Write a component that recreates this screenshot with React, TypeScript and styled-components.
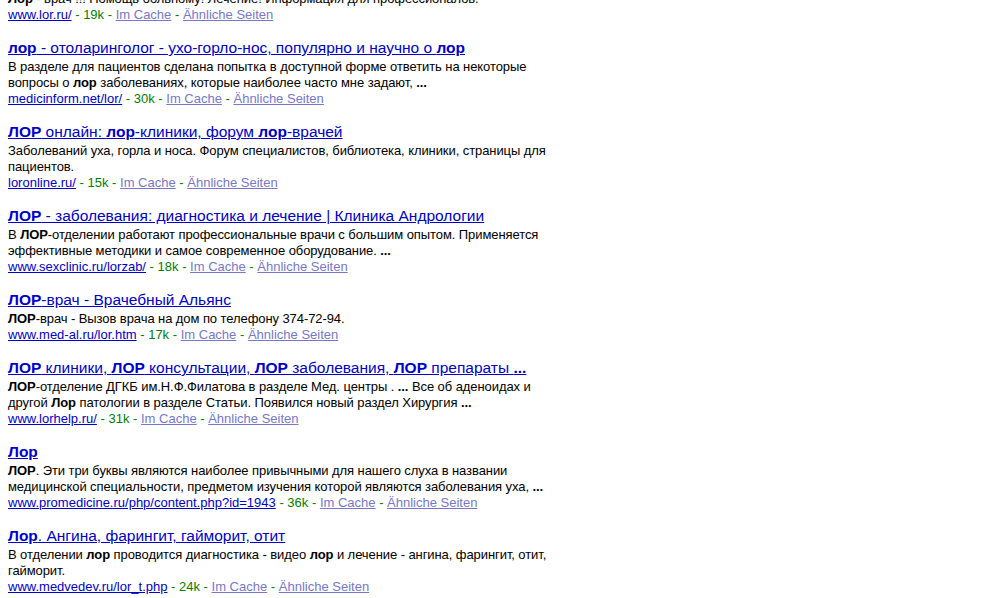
import React from "react";
import styled, { createGlobalStyle } from "styled-components";

const GlobalStyle = createGlobalStyle`
  html, body {
    margin: 0;
    padding: 0;
    background: #fff;
    overflow: hidden;
  }
  body {
    font-family: "Liberation Sans", Arial, sans-serif;
    color: #000;
  }
`;

const Page = styled.div`
  padding: 0 8px;
  margin-top: -31px;
`;

const Result = styled.div`
  margin-bottom: 14px;
`;

const Title = styled.a`
  display: block;
  width: fit-content;
  font-size: 15.5px;
  line-height: 22px;
  color: #0000cc;
  text-decoration: underline;
  cursor: pointer;
`;

const Snippet = styled.div`
  max-width: 546px;
  font-size: 13px;
  line-height: 16px;
  letter-spacing: -0.08px;
`;

const Meta = styled.div`
  font-size: 13px;
  line-height: 16px;
  color: #008000;
`;

const MetaLink = styled.a<{ $faded?: boolean }>`
  color: ${(p) => (p.$faded ? "#7777cc" : "#0000cc")};
  text-decoration: underline;
  cursor: pointer;
`;

type Item = {
  title: string;
  snippet: string;
  url: string;
  size: string;
};

const results: Item[] = [
  {
    title: "*Лор* - врач",
    snippet:
      "*Лор* - врач !!! Помощь больному! Лечение! Информация для профессионалов.",
    url: "www.lor.ru/",
    size: "19k",
  },
  {
    title: "*лор* - отоларинголог - ухо-горло-нос, популярно и научно о *лор*",
    snippet:
      "В разделе для пациентов сделана попытка в доступной форме ответить на некоторые вопросы о *лор* заболеваниях, которые наиболее часто мне задают, *...*",
    url: "medicinform.net/lor/",
    size: "30k",
  },
  {
    title: "*ЛОР* онлайн: *лор*-клиники, форум *лор*-врачей",
    snippet:
      "Заболеваний уха, горла и носа. Форум специалистов, библиотека, клиники, страницы для пациентов.",
    url: "loronline.ru/",
    size: "15k",
  },
  {
    title: "*ЛОР* - заболевания: диагностика и лечение | Клиника Андрологии",
    snippet:
      "В *ЛОР*-отделении работают профессиональные врачи с большим опытом. Применяется эффективные методики и самое современное оборудование. *...*",
    url: "www.sexclinic.ru/lorzab/",
    size: "18k",
  },
  {
    title: "*ЛОР*-врач - Врачебный Альянс",
    snippet: "*ЛОР*-врач - Вызов врача на дом по телефону 374-72-94.",
    url: "www.med-al.ru/lor.htm",
    size: "17k",
  },
  {
    title:
      "*ЛОР* клиники, *ЛОР* консультации, *ЛОР* заболевания, *ЛОР* препараты *...*",
    snippet:
      "*ЛОР*-отделение ДГКБ им.Н.Ф.Филатова в разделе Мед. центры . *...* Все об аденоидах и другой *Лор* патологии в разделе Статьи. Появился новый раздел Хирургия *...*",
    url: "www.lorhelp.ru/",
    size: "31k",
  },
  {
    title: "*Лор*",
    snippet:
      "*ЛОР*. Эти три буквы являются наиболее привычными для нашего слуха в названии медицинской специальности, предметом изучения которой являются заболевания уха, *...*",
    url: "www.promedicine.ru/php/content.php?id=1943",
    size: "36k",
  },
  {
    title: "*Лор*. Ангина, фарингит, гайморит, отит",
    snippet:
      "В отделении *лор* проводится диагностика - видео *лор* и лечение - ангина, фарингит, отит, гайморит.",
    url: "www.medvedev.ru/lor_t.php",
    size: "24k",
  },
];

// text between asterisks is the highlighted query word
function rich(s: string) {
  return s.split("*").map((part, i) =>
    i % 2 === 1 ? <b key={i}>{part}</b> : <React.Fragment key={i}>{part}</React.Fragment>
  );
}

export default function App() {
  return (
    <>
      <GlobalStyle />
      <Page>
        {results.map((r) => (
          <Result key={r.url}>
            <Title>{rich(r.title)}</Title>
            <Snippet>{rich(r.snippet)}</Snippet>
            <Meta>
              <MetaLink>{r.url}</MetaLink> - {r.size} -{" "}
              <MetaLink $faded>Im Cache</MetaLink> -{" "}
              <MetaLink $faded>Ähnliche Seiten</MetaLink>
            </Meta>
          </Result>
        ))}
      </Page>
    </>
  );
}
